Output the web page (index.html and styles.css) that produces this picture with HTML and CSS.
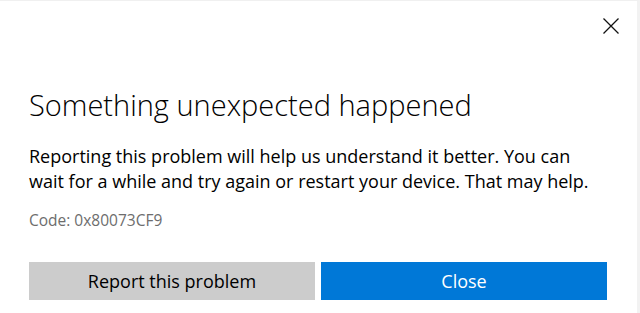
FILE: index.html
```html
<!DOCTYPE html>
<html lang="en">
<head>
<meta charset="utf-8">
<title>Error</title>
<link rel="stylesheet" href="styles.css">
</head>
<body>
<div class="dialog">
  <div class="top">
    <button class="x" aria-label="Close">
      <svg width="16" height="16" viewBox="0 0 16 16"><path d="M0.5 0.5 L15.5 15.5 M15.5 0.5 L0.5 15.5" stroke="#111" stroke-width="1.3" fill="none"/></svg>
    </button>
  </div>
  <div class="content">
    <h1 class="title">Something unexpected happened</h1>
    <p class="msg">Reporting this problem will help us understand it better. You can wait for a while and try again or restart your device. That may help.</p>
    <p class="code">Code: 0x80073CF9</p>
    <div class="actions">
      <button class="btn btn-secondary">Report this problem</button>
      <button class="btn btn-primary">Close</button>
    </div>
  </div>
</div>
</body>
</html>
```
FILE: styles.css
```css
html, body {
  margin: 0;
  padding: 0;
  background: #ffffff;
}
body {
  font-family: "Open Sans", "Noto Sans", sans-serif;
  color: #000;
  width: 640px;
  height: 313px;
  overflow: hidden;
}
.dialog {
  box-sizing: border-box;
  width: 640px;
  height: 313px;
  border-top: 1px solid #f0f0f0;
  border-right: 3px solid #f2f2f2;
}
.top {
  display: flex;
  justify-content: flex-end;
  padding: 17px 18px 0 0;
  height: 40px;
  box-sizing: border-box;
}
.x {
  border: 0;
  background: none;
  padding: 0;
  width: 16px;
  height: 16px;
  display: block;
}
.x svg { display: block; }
.content {
  padding: 46px 30px 0 29px;
}
.title {
  margin: 0;
  font-weight: 300;
  font-size: 29px;
  line-height: 36px;
  letter-spacing: 0;
}
.msg {
  margin: 21px 0 0;
  font-size: 18px;
  line-height: 25px;
  font-weight: 400;
}
.code {
  margin: 16px 0 0;
  font-size: 15.5px;
  line-height: 20px;
  color: #6d6d6d;
}
.actions {
  display: flex;
  gap: 6px;
  margin-top: 32px;
}
.btn {
  flex: 1;
  height: 38px;
  border: 0;
  font-family: inherit;
  font-size: 18px;
  padding: 0;
}
.btn-secondary {
  background: #cccccc;
  color: #000;
}
.btn-primary {
  background: #0078d7;
  color: #fff;
}
```
